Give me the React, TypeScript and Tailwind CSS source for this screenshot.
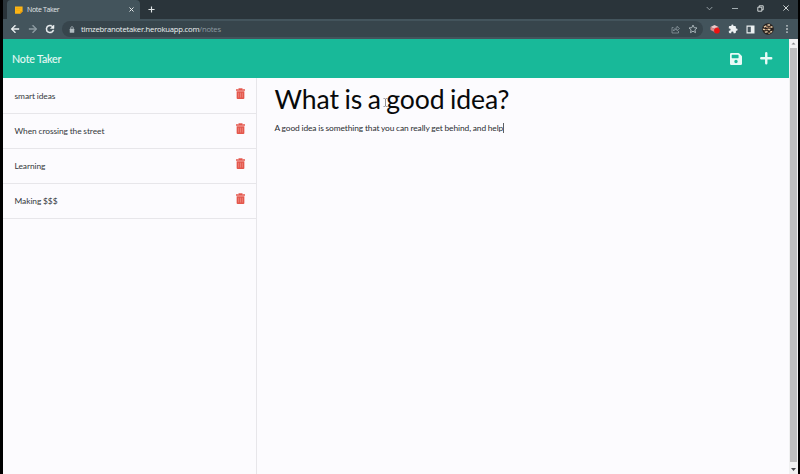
import React from "react";

type IconProps = { className?: string };

const notes = ["smart ideas", "When crossing the street", "Learning", "Making $$$"];

function Arrow({ className }: IconProps) {
  return (
    <svg viewBox="0 0 24 24" className={className} fill="currentColor">
      <path d="M20 11H7.83l5.59-5.59L12 4l-8 8 8 8 1.41-1.41L7.83 13H20v-2z" stroke="currentColor" strokeWidth="1" />
    </svg>
  );
}

function Reload({ className }: IconProps) {
  return (
    <svg viewBox="0 0 24 24" className={className} fill="currentColor">
      <path d="M17.65 6.35A7.96 7.96 0 0 0 12 4a8 8 0 1 0 7.73 10h-2.08A6 6 0 1 1 12 6c1.66 0 3.14.69 4.22 1.78L13 11h7V4l-2.35 2.35z" stroke="currentColor" strokeWidth="1" />
    </svg>
  );
}

function Lock({ className }: IconProps) {
  return (
    <svg viewBox="0 0 12 14" className={className} fill="none">
      <rect x="1.5" y="5.5" width="9" height="8" rx="1" fill="currentColor" />
      <path d="M3.5 6V3.8a2.5 2.5 0 0 1 5 0V6" stroke="currentColor" strokeWidth="1.5" />
    </svg>
  );
}

function Trash({ className }: IconProps) {
  return (
    <svg viewBox="0 0 18 22" className={className} fill="none">
      <path d="M6 2.5V1h6v1.5M0 2.5h18v3H0z" fill="#e4574c" />
      <path d="M5.5 2.5v-2h7v2" stroke="#e4574c" strokeWidth="1" />
      <path d="M1.3 6.5h15.4V20q0 2-2 2H3.3q-2 0-2-2z" fill="#e4574c" />
      <path d="M5.3 9.5V19M9 9.5V19M12.7 9.5V19" stroke="#f09a93" strokeWidth="1.2" />
    </svg>
  );
}

function Save({ className }: IconProps) {
  return (
    <svg viewBox="0 0 448 448" className={className} fill="currentColor">
      <path fillRule="evenodd" d="M434 98 350 14Q336 0 316 0H48Q0 0 0 48v352q0 48 48 48h352q48 0 48-48V132q0-20-14-34zM224 384a64 64 0 1 1 0-128 64 64 0 0 1 0 128zM320 176q0 16-16 16H80q-16 0-16-16V80q0-16 16-16h224q16 0 16 16z" />
    </svg>
  );
}

function Share({ className }: IconProps) {
  return (
    <svg viewBox="0 0 18 18" className={className} fill="none" stroke="currentColor" strokeWidth="1.5">
      <path d="M5 5H2v11h13v-4M5 12c0-4 3-6 7-6V2.5L17 7l-5 4.5V8.5c-3 0-5 1-7 3.5z" />
    </svg>
  );
}

function Avatar() {
  return (
    <svg viewBox="0 0 12 12" className="h-3 w-3">
      <circle cx="6" cy="6" r="5.8" fill="#261f1c" />
      <path d="M1.6 3.4 4 2.2l.8 1.4-2.4 1.2zM5.5 1.2h2.6v1.6H5.5zM8.7 3l2 .6-.5 1.4-1.8-.4zM.8 5.6l2.4.3-.2 1.3-2-.2zM5.6 5.4l3 .6-.6 1.5-2.5-.4zM2.6 8.4l3-.4v1.6l-2.6.2zM8.2 8.2l2.4-.4-.9 1.8-1.6.2z" fill="#e8cda8" />
      <path d="M4 3.5h2.5V5H4zM7.2 3.7h1.6v1.5H7.2zM3.3 6h2v1.3h-2zM6.2 9.4h2V11h-2z" fill="#a17b5c" />
    </svg>
  );
}

function TabStrip() {
  return (
    <div className="flex h-[19px] bg-[#2a343a] text-[#e2e6e7]">
      <div className="flex h-full w-[133px] ml-1 items-center rounded-t-[4px] bg-[#43545c] pl-[8px] pr-[6.5px]">
        <svg viewBox="0 0 8 8" className="h-[8px] w-[8px] shrink-0">
          <path d="M0 .5h7.6v5L5.4 7.8H0z" fill="#fdb515" />
          <path d="M5.4 7.8V5.6h2.2z" fill="#d78a08" />
          <path d="M1 2.5h5M1 4.3h4" stroke="#eaa10c" strokeWidth=".5" />
        </svg>
        <span className="ml-[4px] whitespace-nowrap text-[7px] leading-[9px] tracking-[-0.36px]">Note Taker</span>
        <svg viewBox="0 0 6 6" className="ml-auto h-[5px] w-[5px]" fill="none" stroke="currentColor" strokeWidth="1.2">
          <path d="m.6.6 4.8 4.8M5.4.6.6 5.4" />
        </svg>
      </div>
      <svg viewBox="0 0 8 8" className="ml-[8px] mt-[6px] h-[7px] w-[7px]" fill="none" stroke="currentColor" strokeWidth="1.3">
        <path d="M4 .5v7M.5 4h7" />
      </svg>
      <div className="ml-auto flex items-center pr-[9px] pb-[3px]">
        <svg viewBox="0 0 8 8" className="mr-[19px] h-[7px] w-[7px] text-[#a2acb0]" fill="none" stroke="currentColor" strokeWidth="1">
          <path d="m.8 2.3 3.2 3.2 3.2-3.2" />
        </svg>
        <svg viewBox="0 0 6 6" className="mr-[19px] h-[6px] w-[6px] text-[#a2acb0]" fill="none" stroke="currentColor">
          <path d="M0 3.5h6" />
        </svg>
        <svg viewBox="0 0 7 7" className="mr-[19px] h-[7px] w-[7px]" fill="none" stroke="currentColor" strokeWidth=".9">
          <path d="M.8 2.2h4v4h-4zM2.2 2V.8h4v4H5" />
        </svg>
        <svg viewBox="0 0 6 6" className="h-[6px] w-[6px]" fill="none" stroke="currentColor" strokeWidth=".9">
          <path d="m.4.4 5.2 5.2M5.6.4.4 5.6" />
        </svg>
      </div>
    </div>
  );
}

function Toolbar() {
  return (
    <div className="flex h-5 items-center bg-[#43545c] text-[#edf1f2]">
      <Arrow className="ml-[6px] h-[12px] w-[12px]" />
      <Arrow className="ml-[6px] h-[12px] w-[12px] rotate-180 text-[#8f9da3]" />
      <Reload className="ml-[5px] h-[12px] w-[12px]" />
      <div className="ml-[6px] flex h-[16px] w-[641px] items-center rounded-full bg-[#37454c] pl-[7px] pr-[5px] text-[#b0bbc0]">
        <Lock className="h-[7px] w-[6px]" />
        <div className="ml-[6px] whitespace-nowrap text-[7.7px] leading-[10px] tracking-[-0.23px]">
          <span className="text-[#edf1f2]">timzebranotetaker.herokuapp.com</span>
          <span className="text-[#8e9ba1]">/notes</span>
        </div>
        <Share className="ml-auto h-[9px] w-[9px] text-[#8d9aa0]" />
        <svg viewBox="0 0 24 24" className="ml-[8px] h-[10px] w-[10px]" fill="none" stroke="currentColor" strokeWidth="2.2">
          <path d="m12 2.5 2.8 6.3 6.8.7-5.1 4.6 1.5 6.7-6-3.5-6 3.5 1.5-6.7-5.1-4.6 6.8-.7z" />
        </svg>
      </div>
      <div className="ml-auto flex items-center pr-[10.5px]">
        <svg viewBox="0 0 10 10" className="mr-[8px] h-[10px] w-[10px]">
          <path d="M.5 3 4.5 1l4 2-4 2z" fill="#e9c9ca" />
          <path d="m.5 3 4 2v3l-4-2z" fill="#d98a8c" />
          <path d="M4.5 4 8.5 3v4l-4 2z" fill="#df5252" />
          <circle cx="7" cy="6.7" r="2.8" fill="#ed1111" />
        </svg>
        <svg viewBox="0 0 24 24" className="mr-[8px] h-[10px] w-[10px]" fill="currentColor">
          <path d="M20.5 11H19V7c0-1.1-.9-2-2-2h-4V3.5a2.5 2.5 0 0 0-5 0V5H4a2 2 0 0 0-2 2v3.8h1.5a2.7 2.7 0 0 1 0 5.4H2V20c0 1.1.9 2 2 2h3.8v-1.5a2.7 2.7 0 0 1 5.4 0V22H17a2 2 0 0 0 2-2v-4h1.5a2.5 2.5 0 0 0 0-5z" />
        </svg>
        <svg viewBox="0 0 9 9" className="mr-[7px] h-[9px] w-[9px]" fill="currentColor">
          <path fillRule="evenodd" d="M.5.5h8v8h-8zM1.6 1.7v5.6h3.2V1.7z" />
        </svg>
        <Avatar />
        <svg viewBox="0 0 2 8" className="ml-[12px] h-[8px] w-[2px]" fill="currentColor">
          <path d="M.3.2h1.4v1.4H.3zM.3 3.3h1.4v1.4H.3zM.3 6.4h1.4v1.4H.3z" />
        </svg>
      </div>
    </div>
  );
}

function Scrollbar() {
  return (
    <div className="flex w-[9px] flex-col items-center bg-[#f1f1f2]">
      <svg viewBox="0 0 9 9" className="h-[9px] w-[9px]"><path d="m2.5 5.5 2-2 2 2z" fill="#85878a" /></svg>
      <div className="w-[7px] flex-1 bg-[#bebebf]" />
      <svg viewBox="0 0 9 12" className="h-[12px] w-[9px]"><path d="m2 6 2.5 3L7 6z" fill="#45474a" /></svg>
    </div>
  );
}

export default function App() {
  return (
    <div className="flex h-[474px] w-[800px] flex-col overflow-hidden bg-black pl-[3px] pr-[2px] font-['Lato',sans-serif]">
      <div className="font-['Open_Sans','Noto_Sans',sans-serif]">
        <TabStrip />
        <Toolbar />
      </div>
      <div className="flex min-h-0 flex-1">
        <main className="flex w-[786px] flex-col bg-[#fcfbfe]">
          <header className="flex h-[39px] items-center bg-[#18b999] pl-[9px] pr-[16.5px] text-[#e8faf6]">
            <h1 className="text-[10.7px] leading-[14px] tracking-[-0.16px] [-webkit-text-stroke:0.1px_currentColor]">Note Taker</h1>
            <Save className="ml-auto h-[12px] w-[12px]" />
            <svg viewBox="0 0 12 12" className="ml-[18px] h-[12.5px] w-[12.5px]" fill="none" stroke="currentColor" strokeWidth="2.3" strokeLinecap="round">
              <path d="M6 1.2v9.6M1.2 6h9.6" />
            </svg>
          </header>
          <div className="flex min-h-0 flex-1">
            <aside className="w-[254px] border-r border-[#e7e6ea]">
              <ul className="pt-px">
                {notes.map((note) => (
                  <li key={note} className="flex h-[35px] items-center justify-between border-b border-[#e7e6ea] pl-[11.5px] pr-[11px]">
                    <span className="text-[8.4px] leading-[12px] tracking-[-0.06px] [word-spacing:-0.3px] text-[#34383c]">{note}</span>
                    <Trash className="mb-[5px] h-[11px] w-[9px]" />
                  </li>
                ))}
              </ul>
            </aside>
            <section className="relative flex-1 pl-[17.5px]">
              <h2 className="mt-[4px] h-[34px] whitespace-nowrap text-[26.6px] leading-[34px] tracking-[-0.1px] [word-spacing:-1.2px] text-[#08090a]">What is a good idea?</h2>
              <div className="mt-[6px] flex items-center text-[8.4px] leading-[12px] tracking-[-0.07px] [word-spacing:-0.35px] text-[#292c30]">
                <span className="whitespace-nowrap">A good idea is something that you can really get behind, and help</span>
                <span className="h-[10px] w-px bg-[#5d6064]" />
              </div>
              <svg viewBox="0 0 5 9" className="absolute left-[126px] top-[20px] h-[9px] w-[5px]" fill="none" stroke="#77777b" strokeWidth=".8">
                <path d="M.5.5h1.3l.7.6.7-.6h1.3M.5 8.5h1.3l.7-.6.7.6h1.3M2.5 1v7" />
              </svg>
            </section>
          </div>
        </main>
        <Scrollbar />
      </div>
    </div>
  );
}
